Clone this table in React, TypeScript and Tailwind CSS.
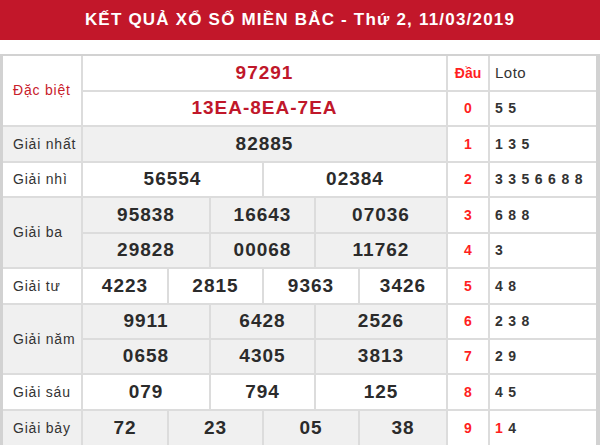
import React from "react";

type Cell = { text: string; span: string };

const LABEL = "flex items-center pl-[10px] text-[14px] tracking-[0.8px] text-[#333]";
const NUM = "flex items-center justify-center text-[19px] font-bold tracking-[1px] text-[#2b2b2b]";
const DAU = "flex items-center justify-center bg-white text-[14px] font-bold text-[#ff1f1f]";
const LOTO = "flex items-center bg-white pl-[5px] text-[14px] font-bold tracking-[0.8px] text-[#333]";

const loto = ["5 5", "1 3 5", "3 3 5 6 6 8 8", "6 8 8", "3", "4 8", "2 3 8", "2 9", "4 5"];

function Nums({ cells, bg }: { cells: Cell[]; bg: string }) {
  return (
    <>
      {cells.map((c, i) => (
        <div key={i} className={`${NUM} ${c.span} ${bg}`}>
          {c.text}
        </div>
      ))}
    </>
  );
}

function Tail({ i }: { i: number }) {
  return (
    <>
      <div className={DAU}>{i}</div>
      <div className={LOTO}>{loto[i]}</div>
    </>
  );
}

export default function App() {
  const grey = "bg-[#f0f0f0]";
  const white = "bg-white";

  return (
    <div className="w-[600px] h-[445px] overflow-hidden bg-white font-['Liberation_Sans',Arial,sans-serif]">
      {/* Title bar */}
      <div className="h-[40px] bg-[#c2172a] flex items-center justify-center text-white text-[17px] font-bold tracking-[1.2px]">
        KẾT QUẢ XỔ SỐ MIỀN BẮC - Thứ 2, 11/03/2019
      </div>

      {/* Results table */}
      <div className="mt-[14px] grid grid-cols-[78px_84px_40px_51px_50px_42px_86px_40px_106px] grid-rows-[34px_33px_34px_33px_34px_33px_34px_33px_33px_34px_34px] gap-[2px] bg-[#dcdcdc] border-l-[3px] border-r-[4px] border-t-2 border-[#d2d2d2]">
        {/* Đặc biệt */}
        <div className={`${LABEL} row-span-2 bg-white text-[#c8202b]`}>Đặc biệt</div>
        <div className={`${NUM} col-span-6 bg-white text-[#c0172a]`}>97291</div>
        <div className="flex items-center justify-center bg-white text-[14px] font-bold text-[#ff1f1f]">Đầu</div>
        <div className="flex items-center bg-white pl-[5px] text-[15px] tracking-[0.5px] text-[#333]">Loto</div>
        <div className={`${NUM} col-span-6 bg-white text-[#c0172a]`}>13EA-8EA-7EA</div>
        <Tail i={0} />

        {/* Giải nhất */}
        <div className={`${LABEL} ${grey}`}>Giải nhất</div>
        <Nums bg={grey} cells={[{ text: "82885", span: "col-span-6" }]} />
        <Tail i={1} />

        {/* Giải nhì */}
        <div className={`${LABEL} ${white}`}>Giải nhì</div>
        <Nums
          bg={white}
          cells={[
            { text: "56554", span: "col-span-3" },
            { text: "02384", span: "col-span-3" },
          ]}
        />
        <Tail i={2} />

        {/* Giải ba */}
        <div className={`${LABEL} row-span-2 ${grey}`}>Giải ba</div>
        <Nums
          bg={grey}
          cells={[
            { text: "95838", span: "col-span-2" },
            { text: "16643", span: "col-span-2" },
            { text: "07036", span: "col-span-2" },
          ]}
        />
        <Tail i={3} />
        <Nums
          bg={grey}
          cells={[
            { text: "29828", span: "col-span-2" },
            { text: "00068", span: "col-span-2" },
            { text: "11762", span: "col-span-2" },
          ]}
        />
        <Tail i={4} />

        {/* Giải tư */}
        <div className={`${LABEL} ${white}`}>Giải tư</div>
        <Nums
          bg={white}
          cells={[
            { text: "4223", span: "col-span-1" },
            { text: "2815", span: "col-span-2" },
            { text: "9363", span: "col-span-2" },
            { text: "3426", span: "col-span-1" },
          ]}
        />
        <Tail i={5} />

        {/* Giải năm */}
        <div className={`${LABEL} row-span-2 ${grey}`}>Giải năm</div>
        <Nums
          bg={grey}
          cells={[
            { text: "9911", span: "col-span-2" },
            { text: "6428", span: "col-span-2" },
            { text: "2526", span: "col-span-2" },
          ]}
        />
        <Tail i={6} />
        <Nums
          bg={grey}
          cells={[
            { text: "0658", span: "col-span-2" },
            { text: "4305", span: "col-span-2" },
            { text: "3813", span: "col-span-2" },
          ]}
        />
        <Tail i={7} />

        {/* Giải sáu */}
        <div className={`${LABEL} ${white}`}>Giải sáu</div>
        <Nums
          bg={white}
          cells={[
            { text: "079", span: "col-span-2" },
            { text: "794", span: "col-span-2" },
            { text: "125", span: "col-span-2" },
          ]}
        />
        <Tail i={8} />

        {/* Giải bảy */}
        <div className={`${LABEL} ${grey}`}>Giải bảy</div>
        <Nums
          bg={grey}
          cells={[
            { text: "72", span: "col-span-1" },
            { text: "23", span: "col-span-2" },
            { text: "05", span: "col-span-2" },
            { text: "38", span: "col-span-1" },
          ]}
        />
        <div className={DAU}>9</div>
        <div className={LOTO}>
          <span className="text-[#ff1f1f]">1</span>&nbsp;4
        </div>
      </div>
    </div>
  );
}
